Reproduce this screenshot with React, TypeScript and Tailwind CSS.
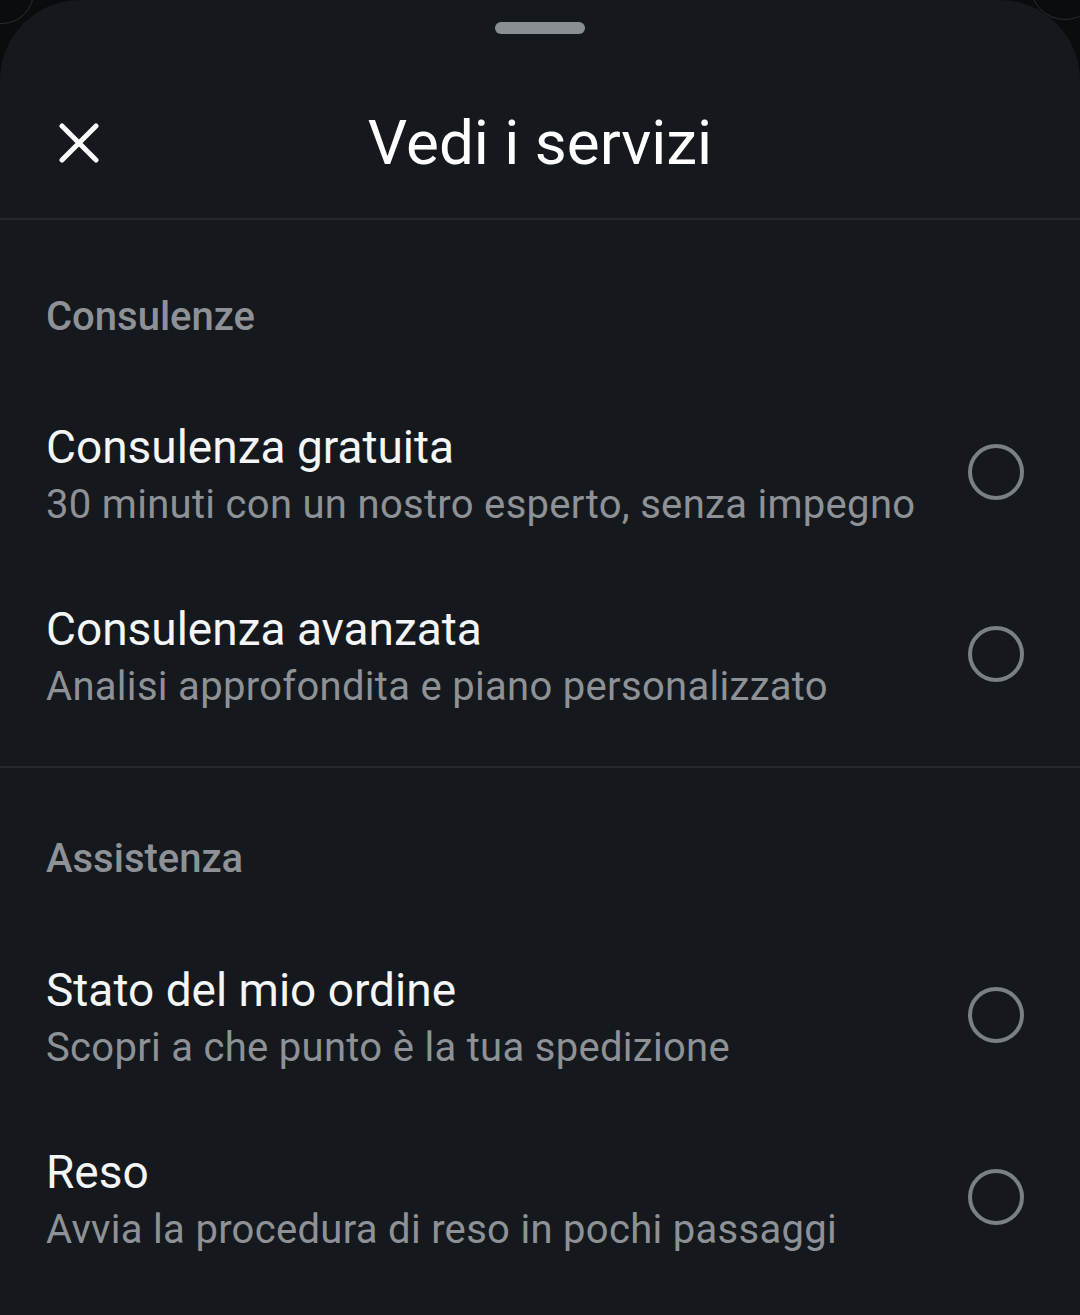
import React from "react";

type Service = {
  title: string;
  subtitle: string;
};

const sections: { heading: string; items: Service[]; pad: string; wrap: string }[] = [
  {
    heading: "Consulenze",
    pad: "pt-[77px] pb-[46px]",
    wrap: "border-b-2 border-[#24282d] pb-[19px]",
    items: [
      {
        title: "Consulenza gratuita",
        subtitle: "30 minuti con un nostro esperto, senza impegno",
      },
      {
        title: "Consulenza avanzata",
        subtitle: "Analisi approfondita e piano personalizzato",
      },
    ],
  },
  {
    heading: "Assistenza",
    pad: "pt-[71px] pb-[47px]",
    wrap: "",
    items: [
      {
        title: "Stato del mio ordine",
        subtitle: "Scopri a che punto è la tua spedizione",
      },
      {
        title: "Reso",
        subtitle: "Avvia la procedura di reso in pochi passaggi",
      },
    ],
  },
];

function CloseIcon() {
  return (
    <svg width="40" height="40" viewBox="0 0 40 40" fill="none">
      <path
        d="M3 3L37 37M37 3L3 37"
        stroke="#ffffff"
        strokeWidth="5"
        strokeLinecap="round"
      />
    </svg>
  );
}

function ServiceRow({ item }: { item: Service }) {
  return (
    <div className="flex h-[182px] items-center justify-between pl-[46px] pr-[56px]">
      <div className="flex flex-col">
        <span className="text-[46px] leading-none text-[#f4f5f6]">
          {item.title}
        </span>
        <span className="mt-[15px] text-[40px] leading-none tracking-[0.3px] text-[#8e9297]">
          {item.subtitle}
        </span>
      </div>
      {/* radio, unchecked */}
      <div className="mb-[4px] h-[56px] w-[56px] shrink-0 rounded-full border-[4px] border-[#7b8085]" />
    </div>
  );
}

export default function App() {
  return (
    <div className="relative min-h-[1315px] overflow-hidden bg-[#0a0c0e] font-['Roboto',sans-serif]">
      {/* faint backdrop rings peeking past the sheet corners */}
      <div className="absolute -left-[30px] -top-[40px] h-[64px] w-[64px] rounded-full border border-[#2a2e33]" />
      <div className="absolute -right-[20px] -top-[50px] h-[70px] w-[70px] rounded-full border border-[#2a2e33]" />

      <div className="relative min-h-[1315px] rounded-t-[80px] bg-[#15191d]">
        {/* drag handle */}
        <div className="flex h-[56px] justify-center pt-[22px]">
          <div className="h-[12px] w-[90px] rounded-full bg-[#8a8f94]" />
        </div>

        {/* header */}
        <div className="relative flex h-[164px] items-center justify-center border-b-2 border-[#24282d] pt-[12px]">
          <button className="absolute left-[59px] top-[67px]">
            <CloseIcon />
          </button>
          <h1 className="text-[62px] leading-none text-white">Vedi i servizi</h1>
        </div>

        {sections.map((section) => (
          <div key={section.heading} className={section.wrap}>
            <div className={"pl-[46px] " + section.pad}>
              <h2 className="text-[40px] font-medium leading-none text-[#8e9297]">
                {section.heading}
              </h2>
            </div>
            {section.items.map((item) => (
              <ServiceRow key={item.title} item={item} />
            ))}
          </div>
        ))}
      </div>
    </div>
  );
}
